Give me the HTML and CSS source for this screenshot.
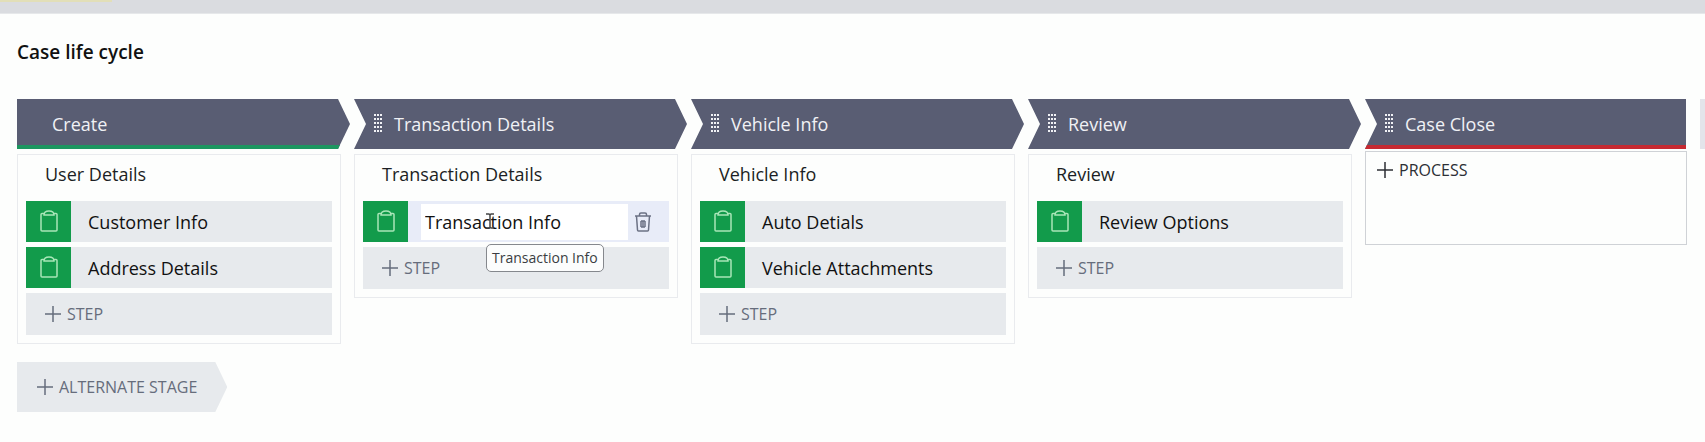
FILE: index.html
```html
<!DOCTYPE html>
<html lang="en">
<head>
<meta charset="utf-8">
<title>Case life cycle</title>
<link rel="stylesheet" href="styles.css">
</head>
<body>
<svg class="sprite" aria-hidden="true">
  <symbol id="clipboard" viewBox="0 0 18 22"><path d="M4 3.500H2A1 1 0 0 0 1 4.500V20a1 1 0 0 0 1 1H16a1 1 0 0 0 1-1V4.500a1 1 0 0 0-1-1H14M4 5C4 2.500 6 1 9 1S14 2.500 14 5Z"/></symbol>
  <symbol id="plus" viewBox="0 0 16 16"><path d="M8 0V16M0 8H16"/></symbol>
  <symbol id="trash" viewBox="0 0 16 20"><path d="M0 4H16M4.500 4V2.500a1.500 1.500 0 0 1 1.500-1.500H10a1.500 1.500 0 0 1 1.500 1.500V4M1.500 4L2.500 18a1 1 0 0 0 1 1H12.500a1 1 0 0 0 1-1L14.500 4M6 9V15M8 9V15M10 9V15M6 9H10M6 15H10"/></symbol>
  <symbol id="grip" viewBox="0 0 8 20"><path d="M1 0V20M4 0V20M7 0V20"/></symbol>
</svg>
<div class="topbar"><div class="progress"></div></div>
<main>
  <h1>Case life cycle</h1>
  <div class="board">
    <section class="stage">
      <h2 class="chevron first">Create</h2>
      <div class="card">
        <h3>User Details</h3>
        <button class="step"><span class="tile"><svg class="clip"><use href="#clipboard"/></svg></span><span class="name">Customer Info</span></button>
        <button class="step"><span class="tile"><svg class="clip"><use href="#clipboard"/></svg></span><span class="name">Address Details</span></button>
        <button class="add"><svg class="plus"><use href="#plus"/></svg>STEP</button>
      </div>
    </section>
    <section class="stage">
      <h2 class="chevron"><svg class="grip"><use href="#grip"/></svg>Transaction Details</h2>
      <div class="card">
        <h3>Transaction Details</h3>
        <div class="step editing">
          <span class="tile"><svg class="clip"><use href="#clipboard"/></svg></span>
          <input type="text" value="Transaction Info" aria-label="Step name">
          <button class="delete" aria-label="Delete step"><svg class="trash"><use href="#trash"/></svg></button>
          <svg class="cursor" viewBox="0 0 8 16"><path d="M0 1H3L4 2 5 1H8M4 2V14M0 15H3L4 14 5 15H8"/></svg>
          <span class="tooltip" role="tooltip">Transaction Info</span>
        </div>
        <button class="add"><svg class="plus"><use href="#plus"/></svg>STEP</button>
      </div>
    </section>
    <section class="stage">
      <h2 class="chevron"><svg class="grip"><use href="#grip"/></svg>Vehicle Info</h2>
      <div class="card">
        <h3>Vehicle Info</h3>
        <button class="step"><span class="tile"><svg class="clip"><use href="#clipboard"/></svg></span><span class="name">Auto Detials</span></button>
        <button class="step"><span class="tile"><svg class="clip"><use href="#clipboard"/></svg></span><span class="name">Vehicle Attachments</span></button>
        <button class="add"><svg class="plus"><use href="#plus"/></svg>STEP</button>
      </div>
    </section>
    <section class="stage">
      <h2 class="chevron"><svg class="grip"><use href="#grip"/></svg>Review</h2>
      <div class="card">
        <h3>Review</h3>
        <button class="step"><span class="tile"><svg class="clip"><use href="#clipboard"/></svg></span><span class="name">Review Options</span></button>
        <button class="add"><svg class="plus"><use href="#plus"/></svg>STEP</button>
      </div>
    </section>
    <section class="stage">
      <h2 class="chevron last"><svg class="grip"><use href="#grip"/></svg>Case Close</h2>
      <div class="card empty">
        <button class="process"><svg class="plus"><use href="#plus"/></svg>PROCESS</button>
      </div>
    </section>
    <div class="next"></div>
  </div>
  <button class="alternate"><svg class="plus"><use href="#plus"/></svg>ALTERNATE STAGE</button>
</main>
</body>
</html>
```

FILE: styles.css
```css
* { box-sizing: border-box; }
body {
  margin: 0;
  background: #fdfefd;
  color: #1c1f24;
  font: 18px/24px "Open Sans", "Noto Sans", sans-serif;
  overflow-x: hidden;
}
button, input { font: inherit; color: inherit; border: 0; margin: 0; padding: 0; background: none; }
svg { display: block; flex: none; fill: none; stroke: currentColor; }
.sprite { position: absolute; width: 0; height: 0; }
.topbar { height: 14px; background: #dadce0; border-bottom: 1px solid #e6e8ea; }
.progress { width: 112px; height: 2px; background: #e2dfb8; }
main { padding: 26px 0 30px 17px; }
h1, h2, h3 { margin: 0; font-size: 18px; font-weight: 400; }
h1 { color: #111; font-size: 19px; font-weight: 600; }
.board {
  display: grid;
  grid-template-columns: repeat(4, 324fr) 322fr 5px;
  column-gap: 13px;
  align-items: start;
  margin-top: 35px;
}
.stage { min-width: 0; }
.chevron {
  display: flex;
  align-items: center;
  gap: 12px;
  height: 50px;
  margin-right: -9px;
  padding-left: 20px;
  color: #f0f1f5;
  background: #595d73;
  clip-path: polygon(0 0, calc(100% - 12px) 0, 100% 50%, calc(100% - 12px) 100%, 0 100%, 12px 50%);
}
.chevron.first {
  padding-left: 35px;
  box-shadow: inset 0 -4px #1d9660;
  clip-path: polygon(0 0, calc(100% - 12px) 0, 100% 50%, calc(100% - 12px) 100%, 0 100%);
}
.chevron.last {
  margin-right: 1px;
  box-shadow: inset 0 -4px #c62a32;
  clip-path: polygon(0 0, 100% 0, 100% 100%, 0 100%, 12px 50%);
}
.grip { width: 8px; height: 20px; stroke-width: 2; stroke-dasharray: 2 2; }
.card {
  display: flex;
  flex-direction: column;
  gap: 5px;
  margin-top: 5px;
  padding: 7px 8px 8px;
  border: 1px solid #e9ebee;
}
.card h3 { padding: 0 0 10px 19px; }
.card.empty { min-height: 94px; margin-top: 2px; padding: 6px 11px; border: 1px solid #cfd2d6; align-items: flex-start; }
.step, .add { display: flex; align-items: center; height: 42px; background: #e7eaed; text-align: left; }
.step { height: 41px; }
.tile { display: flex; justify-content: center; align-items: center; width: 45px; height: 100%; padding-bottom: 2px; background: #129b4b; color: #a9e6b8; }
.clip { width: 18px; height: 22px; stroke-width: 1.5; }
.name { padding-left: 17px; color: #111; }
.editing { position: relative; background: #e8ecf8; }
.editing input { flex: 1; min-width: 0; height: 36px; margin-left: 13px; padding-left: 4px; background: #fff; color: #111; }
.delete { width: 41px; height: 36px; padding-left: 7px; color: #6b7184; }
.trash { width: 16px; height: 20px; stroke-width: 1.5; }
.cursor { position: absolute; left: 123px; top: 12px; width: 8px; height: 16px; color: #444; stroke-width: 1.5; }
.tooltip {
  position: absolute;
  left: 123px;
  top: 43px;
  z-index: 1;
  padding: 1px 5px;
  border: 1px solid #85888d;
  border-radius: 5px;
  background: #fcfdfd;
  color: #3a3d42;
  font-size: 14px;
  white-space: nowrap;
}
.add, .process, .alternate { gap: 6px; font-size: 16px; color: #666d7c; }
.add { padding-left: 19px; }
.process { display: flex; align-items: center; color: #2c2f35; }
.plus { width: 16px; height: 16px; stroke-width: 1.5; }
.next { height: 50px; background: #e3e4ea; }
.alternate {
  display: flex;
  align-items: center;
  height: 50px;
  margin-top: 18px;
  padding: 0 30px 0 20px;
  background: #e7eaed;
  clip-path: polygon(0 0, calc(100% - 12px) 0, 100% 50%, calc(100% - 12px) 100%, 0 100%);
}
```
